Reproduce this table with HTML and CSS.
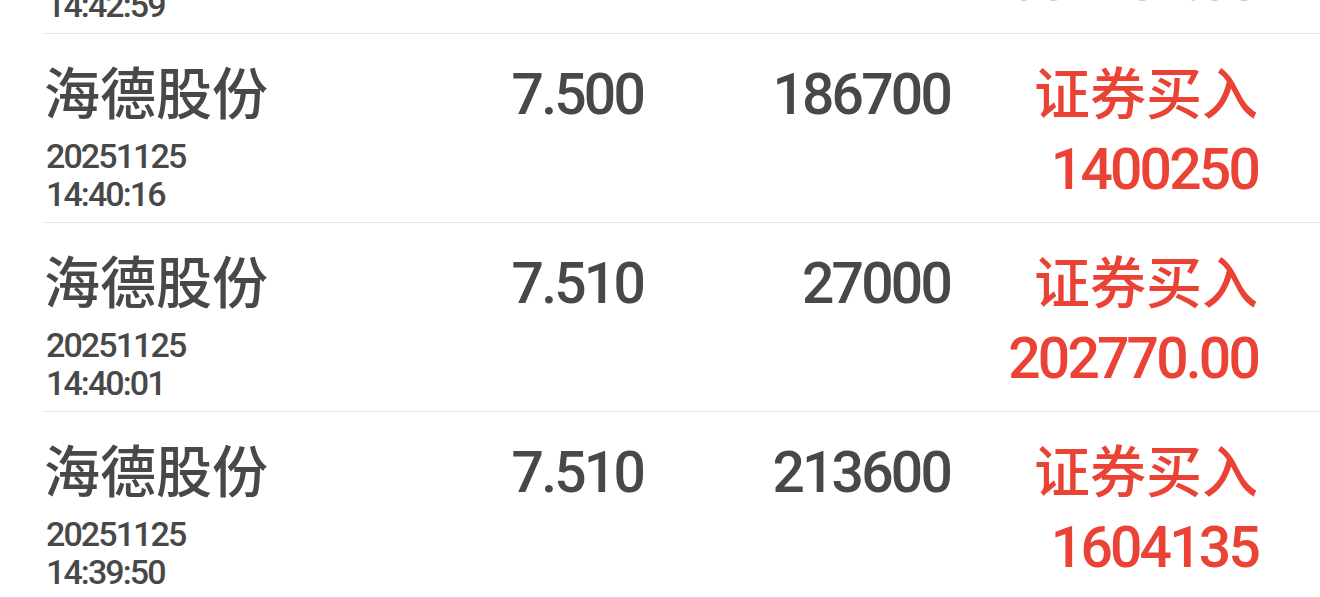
FILE: index.html
```html
<!DOCTYPE html>
<html lang="zh-CN">
<head>
<meta charset="utf-8">
<title>成交记录</title>
<link rel="stylesheet" href="styles.css">
</head>
<body>
<div class="list">
  <div class="row">
    <div class="col-main">
      <div class="name">海德股份</div>
      <div class="stamp">20251125</div>
      <div class="stamp">14:42:59</div>
    </div>
    <div class="num">7.500</div>
    <div class="num">40400</div>
    <div class="col-side sell">
      <div class="type">证券卖出</div>
      <div class="amount">302902.00</div>
    </div>
  </div>
  <div class="row">
    <div class="col-main">
      <div class="name">海德股份</div>
      <div class="stamp">20251125</div>
      <div class="stamp">14:40:16</div>
    </div>
    <div class="num">7.500</div>
    <div class="num">186700</div>
    <div class="col-side buy">
      <div class="type">证券买入</div>
      <div class="amount">1400250</div>
    </div>
  </div>
  <div class="row">
    <div class="col-main">
      <div class="name">海德股份</div>
      <div class="stamp">20251125</div>
      <div class="stamp">14:40:01</div>
    </div>
    <div class="num">7.510</div>
    <div class="num">27000</div>
    <div class="col-side buy">
      <div class="type">证券买入</div>
      <div class="amount">202770.00</div>
    </div>
  </div>
  <div class="row">
    <div class="col-main">
      <div class="name">海德股份</div>
      <div class="stamp">20251125</div>
      <div class="stamp">14:39:50</div>
    </div>
    <div class="num">7.510</div>
    <div class="num">213600</div>
    <div class="col-side buy">
      <div class="type">证券买入</div>
      <div class="amount">1604135</div>
    </div>
  </div>
</div>
</body>
</html>
```

FILE: styles.css
```css
html, body {
  margin: 0;
  padding: 0;
  background: #ffffff;
  overflow: hidden;
}

body {
  font-family: Roboto, "Noto Sans CJK SC", sans-serif;
  color: #484848;
}

.list {
  margin-top: -156px;
  margin-left: 42px;
}

.row {
  box-sizing: border-box;
  height: 189px;
  border-top: 1px solid #e9e9e9;
  padding: 26px 62px 9px 4px;
  display: grid;
  grid-template-columns: 1fr 300px 307px 308px;
  align-items: baseline;
}

.col-main,
.col-side {
  display: flex;
  flex-direction: column;
}

.col-side {
  align-items: flex-end;
}

.name,
.type {
  font-family: "Noto Sans CJK SC", sans-serif;
  font-weight: 500;
  font-size: 56px;
  line-height: 60px;
  white-space: nowrap;
}

.name {
  margin-left: -2px;
}

.stamp {
  font-family: Roboto, sans-serif;
  font-weight: 500;
  font-size: 34px;
  line-height: 38px;
  letter-spacing: -1.9px;
}

.name + .stamp {
  margin-top: 17px;
}

.num,
.amount {
  font-family: Roboto, sans-serif;
  font-weight: 500;
  font-size: 57px;
  line-height: 60px;
  letter-spacing: -2.8px;
  text-align: right;
  white-space: nowrap;
}

.amount {
  margin-top: 20px;
}

.buy {
  color: #ea4336;
}

.sell {
  color: #5cc95c;
}
```
